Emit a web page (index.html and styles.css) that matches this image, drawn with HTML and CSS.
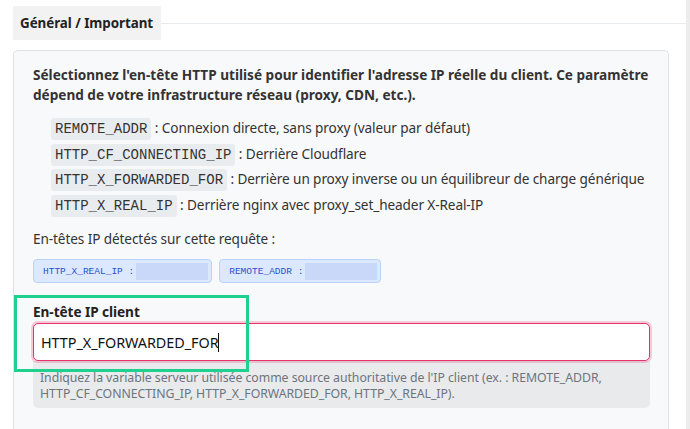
FILE: index.html
```html
<!DOCTYPE html>
<html lang="fr">
<head>
<meta charset="UTF-8" />
<meta name="viewport" content="width=device-width, initial-scale=1" />
<title>Paramètres - IP client</title>
<link rel="stylesheet" href="styles.css">
</head>
<body>

<div class="page">
  <div class="section-head">
    <div class="section-tab">Général / Important</div>
    <div class="section-rule"></div>
  </div>

  <div class="card">
    <p class="intro">Sélectionnez l'en-tête HTTP utilisé pour identifier l'adresse IP réelle du client. Ce paramètre dépend de votre infrastructure réseau (proxy, CDN, etc.).</p>

    <ul class="header-list">
      <li><code>REMOTE_ADDR</code> : Connexion directe, sans proxy (valeur par défaut)</li>
      <li><code>HTTP_CF_CONNECTING_IP</code> : Derrière Cloudflare</li>
      <li><code>HTTP_X_FORWARDED_FOR</code> : Derrière un proxy inverse ou un équilibreur de charge générique</li>
      <li><code>HTTP_X_REAL_IP</code> : Derrière nginx avec proxy_set_header X-Real-IP</li>
    </ul>

    <p class="detected-title">En-têtes IP détectés sur cette requête :</p>
    <div class="detected">
      <span class="chip">HTTP_X_REAL_IP :<span class="masked"></span></span>
      <span class="chip">REMOTE_ADDR :<span class="masked"></span></span>
    </div>

    <div class="field">
      <label class="field-label" for="ip-header">En-tête IP client</label>
      <div class="input-wrap">
        <input id="ip-header" class="text-input" type="text" value="HTTP_X_FORWARDED_FOR"><span class="caret"></span>
      </div>
      <div class="help">Indiquez la variable serveur utilisée comme source authoritative de l'IP client (ex. : REMOTE_ADDR, HTTP_CF_CONNECTING_IP, HTTP_X_FORWARDED_FOR, HTTP_X_REAL_IP).</div>
      <div class="highlight"></div>
    </div>
  </div>
</div>

</body>
</html>
```

FILE: styles.css
```css
html, body {
  margin: 0;
  height: 100%;
  overflow: hidden;
}
body {
  font-family: "Noto Sans", "Open Sans", sans-serif;
  font-size: 13.6px;
  letter-spacing: -0.1px;
  color: #333;
  background: #fff;
}

.page {
  box-sizing: border-box;
  width: 690px;
  min-height: 100%;
  padding: 6px 0 0 13px;
  border-right: 4px solid #ececec;
}

/* legend-like title sitting on a line */
.section-head {
  display: flex;
  align-items: center;
}
.section-tab {
  background: #f2f2f2;
  padding: 0 8px 0 7px;
  height: 34px;
  line-height: 34px;
  font-size: 13.4px;
  font-weight: 700;
  letter-spacing: -0.05px;
  color: #222;
}
.section-rule {
  flex: 1;
  border-top: 1px solid #e9ecef;
}

.card {
  box-sizing: border-box;
  width: 656px;
  margin-top: 10px;
  padding: 14px 19px 60px 19px;
  background: #f8f9fa;
  border: 1px solid #dee2e6;
  border-radius: 5px;
}

.intro {
  margin: 0;
  font-weight: 700;
  letter-spacing: 0;
  line-height: 20px;
  color: #333;
}

.header-list {
  list-style: none;
  margin: 10px 0 0 0;
  padding: 0 0 0 18px;
  line-height: 25.6px;
}
.header-list li {
  height: 25.6px;
}
.header-list code {
  font-family: "Liberation Mono", "DejaVu Sans Mono", monospace;
  font-size: 14px;
  line-height: 1;
  letter-spacing: 0;
  background: #e9ecef;
  border-radius: 3px;
  padding: 3px 4px;
  color: #333;
}

.detected-title {
  margin: 12px 0 0 0;
  line-height: 20px;
}
.detected {
  display: flex;
  gap: 7px;
  margin-top: 10px;
}
.chip {
  display: flex;
  align-items: center;
  box-sizing: border-box;
  height: 24px;
  padding: 0 3px 0 9px;
  background: #dce8fd;
  border: 1px solid #b9d2fb;
  border-radius: 4px;
  font-family: "Liberation Mono", "DejaVu Sans Mono", monospace;
  font-size: 9.5px;
  letter-spacing: 0;
  color: #2c4fcf;
  white-space: pre;
}
.masked {
  display: inline-block;
  width: 72px;
  height: 17px;
  margin-left: 2px;
  background: #c9d8f9;
}

.field {
  position: relative;
  margin-top: 19px;
}
.field-label {
  display: block;
  font-weight: 700;
  letter-spacing: -0.05px;
  line-height: 20px;
  color: #222;
}
.input-wrap {
  position: relative;
  margin-top: 1px;
}
.text-input {
  box-sizing: border-box;
  width: 617px;
  height: 38px;
  padding: 0 7px;
  font-family: inherit;
  font-size: 14.4px;
  letter-spacing: -0.05px;
  color: #111;
  background: #fff;
  border: 1px solid #e5346c;
  border-radius: 5px;
  box-shadow: 0 0 0 2px rgba(232, 62, 110, 0.25);
  outline: none;
}
.caret {
  position: absolute;
  left: 185px;
  top: 10px;
  width: 1px;
  height: 19px;
  background: #111;
}
.help {
  box-sizing: border-box;
  width: 617px;
  padding: 9px 10px 6px 7px;
  background: #e9eaec;
  border-radius: 0 0 5px 5px;
  font-size: 12.3px;
  letter-spacing: -0.05px;
  line-height: 16px;
  color: #6c757d;
}

/* green frame drawn over the label and the input */
.highlight {
  position: absolute;
  left: -19px;
  top: -7px;
  width: 235px;
  height: 77px;
  box-sizing: border-box;
  border: 3px solid #20d08f;
}
```
